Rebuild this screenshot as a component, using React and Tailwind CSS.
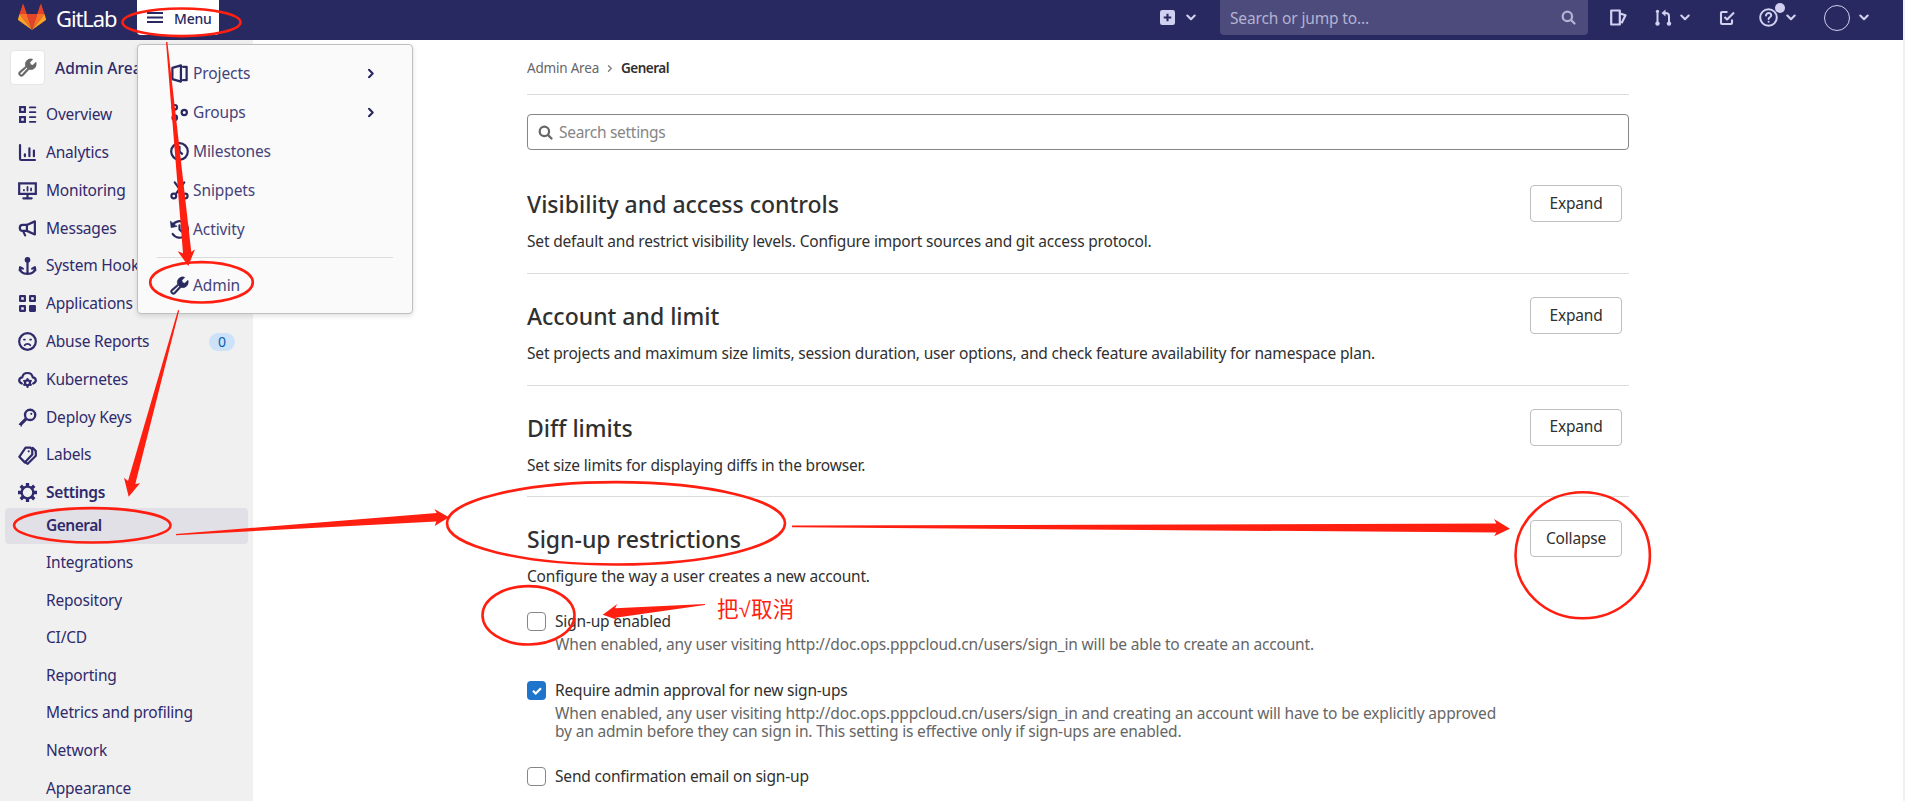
import React from "react";

const Svg = ({ children, className = "size-[19px]" }) => (
  <svg viewBox="0 0 16 16" className={`shrink-0 ${className}`} fill="none" stroke="currentColor" strokeWidth="1.85" strokeLinecap="round" strokeLinejoin="round">
    {children}
  </svg>
);

const WRENCH = (
  <path fill="currentColor" stroke="currentColor" strokeWidth=".4" fillRule="evenodd" d="M15.2 4.1a.4.4 0 0 0-.65-.15l-2.1 2.1-1.9-.5-.5-1.9 2.1-2.1A.4.4 0 0 0 12 .9a4.6 4.6 0 0 0-5.6 6L1.2 11.4a2.35 2.35 0 1 0 3.4 3.4l4.7-5.2a4.6 4.6 0 0 0 5.9-5.5zM3.5 13.7a.9.9 0 1 1-1.2-1.3l5-4.4 .7.7z" />
);

const ICONS = {
  overview: (
    <>
      <rect x="1.8" y="1.8" width="4" height="4" strokeLinejoin="miter" />
      <rect x="1.8" y="10.2" width="4" height="4" strokeLinejoin="miter" />
      <path d="M10 2h4.6M10 6h4.6M10 10.2h4.6M10 14.2h4.6" strokeWidth="1.6" />
    </>
  ),
  analytics: <path d="M1.7 1.7v11.6c0 .6.4 1 1 1h11.6M5.8 9.5v1.6M9.6 4.4v6.7M13.4 6.4v4.7" />,
  monitoring: (
    <>
      <path d="M1 2h14v8.8H1zM8 11v3.5M4.5 14.6h7" strokeLinejoin="miter" />
      <path d="M5 7.4v.5M8 5v3M11 6.3v1.6" strokeWidth="1.5" />
    </>
  ),
  messages: (
    <>
      <path d="M14.2 2v11L7.5 10H4a2.5 2.5 0 0 1 0-5h3.5z" />
      <path d="M7.5 5v5M4.3 10.2l1.7 3.6" />
    </>
  ),
  hooks: (
    <>
      <path d="M8 3.5v10.5M1.7 9c0 3.5 2.5 5.2 6.3 5.2s6.3-1.7 6.3-5.2M1.4 11.2l.4-2.6 2.3 1.2M14.6 11.2l-.4-2.6-2.3 1.2" />
      <circle cx="8" cy="2.4" r="1.5" fill="currentColor" />
    </>
  ),
  applications: (
    <>
      <rect x="1.8" y="1.8" width="4" height="4" />
      <rect x="10.2" y="1.8" width="4" height="4" />
      <rect x="1.8" y="10.2" width="4" height="4" />
      <rect x="10.2" y="10.2" width="4" height="4" fill="currentColor" />
    </>
  ),
  abuse: (
    <>
      <circle cx="8" cy="8" r="7" />
      <path d="M5.6 11.2c1-1.6 3.8-1.6 4.8 0M5 6.4h.8M10.2 6.4h.8" strokeWidth="1.5" />
    </>
  ),
  kubernetes: (
    <>
      <path d="M3.2 11.4C-.2 9.8.8 6.3 3.6 6.2 4.4 1.3 11.6 1.3 12.4 6.2c2.8.1 3.8 3.6.4 5.2" />
      <circle cx="8" cy="10.8" r="2.1" />
      <path d="M8 7.6v.6M8 13.4v.9M5.2 9.2l.6.4M10.2 12l.6.4M5.2 12.4l.6-.4M10.2 9.6l.6-.4" />
    </>
  ),
  keys: (
    <>
      <circle cx="10.2" cy="5.8" r="4.3" strokeWidth="2" />
      <path d="M6.8 9.2 2 14v.3M2 14.2h1.3" strokeWidth="2.6" strokeLinecap="butt" />
      <circle cx="11.2" cy="4.9" r=".9" fill="currentColor" stroke="none" />
    </>
  ),
  labels: (
    <>
      <path d="M6.4 1.4h4.2L12 3v4.2l-6.3 6.6-4.6-4.7z" />
      <path d="M12.5 1.6 15 4.2v4L8.2 15l-2.4-1.5" />
      <circle cx="9" cy="4.5" r=".9" fill="currentColor" stroke="none" />
    </>
  ),
  settings: (
    <>
      <circle cx="8" cy="8" r="4.9" strokeWidth="1.9" />
      <path strokeWidth="2.8" strokeLinecap="butt" d="M8 0v2.6M8 13.4V16M0 8h2.6M13.4 8H16M2.3 2.3l1.9 1.9M11.8 11.8l1.9 1.9M2.3 13.7l1.9-1.9M11.8 4.2l1.9-1.9" />
    </>
  ),
  wrench: WRENCH,
  projects: <path d="M2 3.3 9.2 1.2v13.6L2 12.7zM11 2.400h3v11.200h-3" strokeWidth="1.9" />,
  groups: (
    <>
      <circle cx="4" cy="3.6" r="1.9" />
      <circle cx="12" cy="8" r="2.2" />
      <circle cx="4" cy="12.4" r="1.9" />
    </>
  ),
  clock: (
    <>
      <circle cx="8" cy="8" r="7" />
      <path d="M8 4v4l2.2 2" />
    </>
  ),
  snippets: (
    <>
      <circle cx="3.2" cy="12.6" r="2" />
      <circle cx="12.8" cy="12.6" r="2" />
      <path d="M4 1.2 11 10.8M12 1.2 5 10.8" />
    </>
  ),
  history: (
    <>
      <path d="M2 4.6a7 7 0 1 1 .3 7.2M8 4.5V8l2 1.8" />
      <path d="M.4 1.3 1 6.4l4.7-1z" fill="currentColor" strokeWidth=".6" />
    </>
  ),
};

const Icon = ({ name, className }) => <Svg className={className}>{ICONS[name]}</Svg>;

const Down = ({ className = "" }) => (
  <svg viewBox="0 0 10 7" className={`h-[7px] w-[10px] shrink-0 ${className}`} fill="none" stroke="currentColor" strokeWidth="2.1" strokeLinecap="round" strokeLinejoin="round">
    <path d="M1.3 1.5 5 5.2l3.7-3.7" />
  </svg>
);

const Search = ({ className }) => (
  <svg viewBox="0 0 16 16" className={`shrink-0 ${className}`} fill="none" stroke="currentColor" strokeWidth="2.4" strokeLinecap="round">
    <circle cx="6.8" cy="6.8" r="5" />
    <path d="m10.8 10.8 3.6 3.6" />
  </svg>
);

const NAV = [
  ["overview", "Overview"],
  ["analytics", "Analytics"],
  ["monitoring", "Monitoring"],
  ["messages", "Messages"],
  ["hooks", "System Hooks"],
  ["applications", "Applications"],
  ["abuse", "Abuse Reports", "0"],
  ["kubernetes", "Kubernetes"],
  ["keys", "Deploy Keys"],
  ["labels", "Labels"],
  ["settings", "Settings"],
];

const SUB = ["Integrations", "Repository", "CI/CD", "Reporting", "Metrics and profiling", "Network", "Appearance"];

const MENU = [
  ["projects", "Projects", true],
  ["groups", "Groups", true],
  ["clock", "Milestones"],
  ["snippets", "Snippets"],
  ["history", "Activity"],
];

const SECTIONS = [
  ["Visibility and access controls", "Set default and restrict visibility levels. Configure import sources and git access protocol."],
  ["Account and limit", "Set projects and maximum size limits, session duration, user options, and check feature availability for namespace plan."],
  ["Diff limits", "Set size limits for displaying diffs in the browser."],
  ["Sign-up restrictions", "Configure the way a user creates a new account."],
];

function Header() {
  return (
    <header className="flex h-10 items-start bg-[#292961] text-[#d1d0f0]">
      <svg viewBox="0 0 28 26" className="ml-[18px] mt-1 h-[26px] w-7 shrink-0">
        <path fill="#e24329" d="m14 26 5.2-15.9H8.8z" />
        <path fill="#fc6d26" d="M14 26 8.8 10.1H1.5zM14 26l5.2-15.9h7.3z" />
        <path fill="#fca326" d="M1.5 10.1 0 15c-.1.5 0 .9.4 1.2L14 26zM26.5 10.1 28 15c.1.5 0 .9-.4 1.2L14 26z" />
        <path fill="#e24329" d="M1.5 10.1h7.3L5.6.4C5.4 0 4.9 0 4.7.4zM26.5 10.1h-7.3L22.4.4c.2-.4.7-.4.9 0z" />
      </svg>
      <span className="ml-[10px] mt-[3px] w-[70px] text-[22px] leading-[30px] tracking-[-1.1px] text-white">GitLab</span>
      <div className="ml-[11px] flex h-[35px] w-[82px] items-center rounded-b-[4px] bg-white pl-[10px] text-[#292961]">
        <svg viewBox="0 0 16 12" className="h-3 w-4" stroke="currentColor" strokeWidth="2">
          <path d="M0 1h16M0 5.500h16M0 10h16" />
        </svg>
        <span className="ml-[11px] pt-[2px] text-[14px] font-medium leading-[33px] tracking-[-0.2px]">Menu</span>
      </div>
      <div className="ml-auto flex h-[35px] items-center">
        <svg viewBox="0 0 16 16" className="size-[15px]">
          <rect width="16" height="16" rx="2.5" fill="currentColor" />
          <path d="M8 4v8M4 8h8" stroke="#292961" strokeWidth="2.2" />
        </svg>
        <Down className="ml-[11px]" />
        <div className="ml-6 flex h-[35px] w-[368px] items-center justify-between rounded-b-[4px] bg-[#4d4b7b] pl-[10px] pr-3 text-[#b3b2d3]">
          <span className="pt-px text-[15.5px] leading-[34px] tracking-[-0.15px]">Search or jump to...</span>
          <Search className="size-[15px]" />
        </div>
        <svg viewBox="0 0 17 17" className="ml-[22px] size-[17px]" fill="none" stroke="currentColor" strokeWidth="2.2" strokeLinejoin="round">
          <path d="M1.2 1.5h8.6v14H1.2zM10 4.5l5.5 1.8-4 8" />
        </svg>
        <svg viewBox="0 0 17 17" className="ml-[28px] size-[17px]" fill="none" stroke="currentColor" strokeWidth="2">
          <path d="M2.5 2v13M14 15V7c0-2-1.5-3-3.5-3H8" />
          <circle cx="2.5" cy="2.3" r="1.6" fill="currentColor" stroke="none" />
          <circle cx="2.5" cy="14.6" r="2.2" fill="currentColor" stroke="none" />
          <circle cx="14" cy="14.6" r="2.2" fill="currentColor" stroke="none" />
          <path d="M10.5.5v7L6.5 4z" fill="currentColor" stroke="none" />
        </svg>
        <Down className="ml-2" />
        <svg viewBox="0 0 16 16" className="ml-[29px] size-4" fill="none" stroke="currentColor" strokeWidth="2.1" strokeLinejoin="round">
          <path d="M8.5 2H3a1 1 0 0 0-1 1v10a1 1 0 0 0 1 1h9a1 1 0 0 0 1-1V9.5M5.5 7l2.6 2.500L15 2.500" />
        </svg>
        <div className="relative ml-6">
          <svg viewBox="0 0 19 19" className="size-[19px]" fill="none" stroke="currentColor" strokeWidth="2" strokeLinecap="round">
            <circle cx="9.5" cy="9.5" r="8.3" />
            <path d="M7 7.5c0-3.3 5.2-3.1 5.2 0 0 1.7-2.6 1.8-2.6 3.4M9.6 13.7v.1" />
          </svg>
          <span className="absolute -top-[5px] left-4 size-[10px] rounded-full bg-[#d1d0f0]" />
        </div>
        <Down className="ml-2" />
        <span className="ml-7 size-[26px] rounded-full border border-[#d1d0f0]" />
        <Down className="ml-[9px] mr-[34px]" />
      </div>
    </header>
  );
}

function Sidebar() {
  return (
    <aside className="w-[253px] shrink-0 overflow-hidden bg-[#f0f0f0] text-[15.5px] text-[#2f2a6b]">
      <div className="mt-[10px] flex h-[35px] items-center pl-[10px]">
        <span className="flex size-[35px] items-center justify-center rounded-[4px] border border-[#e6e6e6] bg-white text-[#666]">
          <Icon name="wrench" />
        </span>
        <span className="ml-[10px] pt-[2px] font-medium">Admin Area</span>
      </div>
      <nav className="mt-[11px]">
        {NAV.map(([icon, label, badge]) => (
          <div key={label} className="flex h-[37.8px] items-center pl-[18px] pr-[18px]">
            <Icon name={icon} />
            <span className={label === "Settings" ? "ml-[9px] font-semibold tracking-[-0.35px]" : "ml-[9px] tracking-[-0.2px]"}>{label}</span>
            {badge && <span className="ml-auto h-[18px] w-[26px] rounded-full bg-[#cbe2f9] text-center text-[14px] leading-[18px] text-[#0b5cad]">{badge}</span>}
          </div>
        ))}
        <div className="-mt-1 ml-[5px] mr-[5px] flex h-9 items-center rounded-[4px] bg-[#e1e0e6] pl-[41px] font-semibold tracking-[-0.5px]">General</div>
        {SUB.map((label) => (
          <div key={label} className="flex h-[37.6px] items-center pl-[46px] tracking-[-0.2px]">{label}</div>
        ))}
      </nav>
    </aside>
  );
}

function MenuPanel() {
  return (
    <div className="absolute left-[137px] top-11 h-[270px] w-[276px] rounded-[4px] border border-[#bfbfbf] bg-[#fafafa] pt-[9px] text-[15.5px] tracking-[-0.1px] text-[#45437a] shadow-[0_2px_5px_rgba(0,0,0,0.12)]">
      {MENU.map(([icon, label, more]) => (
        <div key={label} className="flex h-[39px] items-center pl-8 pr-[36px]">
          <Icon name={icon} className="size-[19px] text-[#292961]" />
          <span className="ml-[4px]">{label}</span>
          {more && <Down className="ml-auto -rotate-90 text-[#292961]" />}
        </div>
      ))}
      <div className="mx-[19px] mt-2 h-px bg-[#dbdbdb]" />
      <div className="mt-2 flex h-[39px] items-center pl-8">
        <Icon name="wrench" className="size-[19px] text-[#292961]" />
        <span className="ml-[4px]">Admin</span>
      </div>
    </div>
  );
}

function Check({ checked }) {
  return checked ? (
    <span className="flex size-[19px] shrink-0 items-center justify-center rounded-[4px] bg-[#1f75cb]">
      <svg viewBox="0 0 10 8" className="h-2 w-[10px]" fill="none" stroke="white" strokeWidth="2.2">
        <path d="m1 3.8 2.7 2.7L9 1.2" />
      </svg>
    </span>
  ) : (
    <span className="size-[19px] shrink-0 rounded-[4px] border border-[#868686] bg-white" />
  );
}

function Option({ label, checked, children, className }) {
  return (
    <div className={`flex ${className}`}>
      <Check checked={checked} />
      <div className="ml-[9px]">
        <div className="text-[15.5px] leading-[18px] tracking-[-0.18px] text-[#303030]">{label}</div>
        <div className="mt-[5px] whitespace-nowrap text-[15.5px] leading-[18px] tracking-[-0.165px] text-[#666]">{children}</div>
      </div>
    </div>
  );
}

function Content() {
  return (
    <main className="ml-[274px] w-[1102px] shrink-0 text-[#303030]">
      <div className="flex h-[55px] items-center border-b border-[#dbdbdb] pt-[2px] text-[13.5px]">
        <span className="tracking-[-0.2px] text-[#666]">Admin Area</span>
        <Down className="mx-[6px] -rotate-90 scale-75 text-[#868686]" />
        <span className="font-semibold tracking-[-0.5px]">General</span>
      </div>
      <div className="mt-[19px] flex h-9 items-center rounded-[4px] border border-[#868686] pl-[10px]">
        <Search className="size-[15px] text-[#666]" />
        <span className="ml-[6px] pt-[2px] text-[15.5px] tracking-[-0.3px] text-[#868686]">Search settings</span>
      </div>
      {SECTIONS.map(([title, text], i) => (
        <section key={title} className={i === 0 ? "flex h-[123px] justify-between pt-[35px]" : "flex h-[111.5px] justify-between border-t border-[#dbdbdb] pt-[23px]"}>
          <div>
            <h2 className="mt-[2px] text-[23px] font-medium leading-[34px]">{title}</h2>
            <p className="mt-[9px] whitespace-nowrap text-[15.5px] leading-[22px] tracking-[-0.18px]">{text}</p>
          </div>
          <div className="mr-[7px] flex h-[37px] w-[92px] items-center justify-center rounded-[4px] border border-[#bfbfbf] text-[15.5px] tracking-[-0.2px]">{i === 3 ? "Collapse" : "Expand"}</div>
        </section>
      ))}
      <Option label="Sign-up enabled" className="mt-[4.5px]">
        When enabled, any user visiting http://doc.ops.pppcloud.cn/users/sign_in will be able to create an account.
      </Option>
      <Option label="Require admin approval for new sign-ups" checked className="mt-[28px]">
        When enabled, any user visiting http://doc.ops.pppcloud.cn/users/sign_in and creating an account will have to be explicitly approved
        <br />
        by an admin before they can sign in. This setting is effective only if sign-ups are enabled.
      </Option>
      <Option label="Send confirmation email on sign-up" className="mt-[27px]" />
    </main>
  );
}

function Annotations() {
  return (
    <>
      <svg viewBox="0 0 1905 801" className="pointer-events-none absolute left-0 top-0 h-[801px] w-[1905px]" fill="none" stroke="#ff1f10" strokeWidth="2.6">
        <ellipse cx="181.5" cy="22.3" rx="59" ry="13.8" />
        <ellipse cx="201.5" cy="282.3" rx="51.3" ry="20.2" />
        <ellipse cx="92.3" cy="525.3" rx="78.2" ry="17.2" />
        <ellipse cx="616" cy="523.3" rx="169" ry="41.2" />
        <ellipse cx="528.5" cy="615.3" rx="46" ry="29.2" />
        <ellipse cx="1582.7" cy="555.3" rx="67.2" ry="63" />
        <g fill="#ff1f10" stroke="none">
          <path d="M166 42h1.4L191.3 252l3.7-2.7-6.7 16.7-10.6-14.7 5.3 2z" />
          <path d="m178 310 1.2.4L135.3 484l4.7-.7-11.3 13.4-4.7-19 4 3.3z" />
          <path d="M176 533.9 436.7 513l-2.4-4 14.7 8.3-14.3 8.7 1.6-4.5L176 535.2z" />
          <path d="m792 525.600 704.400-2-2.400-4.600 16 9.700-16 7.600 2.400-3.700L792 527.200z" />
          <path d="M705 603.900 615 608.300l2.300-4.300-14.600 10.700 15 5.300-2.400-2.300L705 605.100z" />
        </g>
      </svg>
      <span className="absolute left-[717px] top-[598px] whitespace-nowrap font-['Liberation_Sans','Noto_Sans_CJK_SC',sans-serif] text-[21.5px] leading-[24px] tracking-[0.3px] text-[#ff1f10]">把√取消</span>
    </>
  );
}

export default function App() {
  return (
    <div className="relative flex h-[801px] w-[1905px] overflow-hidden bg-white font-['Noto_Sans',sans-serif]">
      <div className="flex w-[1903px] flex-col">
        <Header />
        <div className="flex min-h-0 flex-1 overflow-hidden">
          <Sidebar />
          <Content />
        </div>
      </div>
      <div className="w-[2px] bg-[#f1f1f1]" />
      <MenuPanel />
      <Annotations />
    </div>
  );
}
